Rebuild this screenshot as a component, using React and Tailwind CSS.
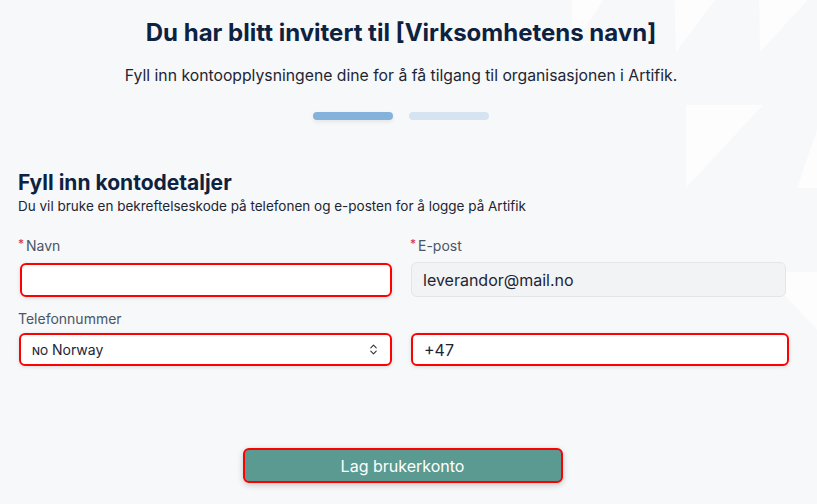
import { ChevronsUpDown } from "lucide-react";

function Backdrop() {
  return (
    <svg
      className="pointer-events-none absolute inset-0 h-full w-full"
      viewBox="0 0 817 504"
      preserveAspectRatio="none"
    >
      <g fill="#fdfdfe">
        <path d="M572 -10 L610 -10 L572 48 Z" />
        <path d="M674 -20 L730 -20 L676 52 Z" />
        <path d="M759 -20 L817 -20 L817 -10 L760 52 Z" />
        <path d="M686 105 L763 105 L686 188 Z" />
        <path d="M817 130 L817 188 L797 188 Z" />
        <path d="M763 272 L817 272 L817 330 Z" />
      </g>
    </svg>
  );
}

function Label({ children, required, className = "" }) {
  return (
    <label className={`flex items-start text-[14px] leading-4 text-[#4a5565] ${className}`}>
      {required && <span className="mr-[2px] text-[12px] leading-3 text-[#e0245e]">*</span>}
      {children}
    </label>
  );
}

export default function App() {
  return (
    <div
      className="relative h-[504px] w-[817px] overflow-hidden bg-[#f7f8fa]"
      style={{ fontFamily: "Inter, 'Liberation Sans', sans-serif" }}
    >
      <Backdrop />

      <div className="relative w-[802px]">
        <div className="flex flex-col items-center pt-[19px]">
          <h1 className="text-[24px] font-bold leading-7 text-[#0d2240]">
            Du har blitt invitert til [Virksomhetens navn]
          </h1>
          <p className="mt-[19px] text-[15.75px] leading-5 text-[#1d2533]">
            Fyll inn kontoopplysningene dine for å få tilgang til organisasjonen i Artifik.
          </p>
          <div className="mt-[26px] flex gap-4">
            <div className="h-[8px] w-[80px] rounded-full bg-[#84b2da] shadow-[0_2px_4px_rgba(0,0,0,0.08)]" />
            <div className="h-[8px] w-[80px] rounded-full bg-[#d6e4f1]" />
          </div>
        </div>

        <div className="pl-[18px] pt-[51px]">
          <h2 className="text-[21px] font-bold leading-6 text-[#0d2240]">Fyll inn kontodetaljer</h2>
          <p className="mt-[2px] text-[13.5px] leading-[18px] text-[#1d2533]">
            Du vil bruke en bekreftelseskode på telefonen og e-posten for å logge på Artifik
          </p>

          <div className="mt-[23px] grid grid-cols-[374px_379px] gap-x-[18px]">
            <div>
              <Label required className="mb-[9px]">Navn</Label>
              <div className="ml-[2px] h-[34px] rounded-[6px] border-2 border-[#f00] bg-white shadow-[0_1px_4px_rgba(0,0,0,0.12)]" />
            </div>
            <div>
              <Label required className="mb-[8px]">E-post</Label>
              <div className="ml-[1px] flex h-[35px] w-[375px] items-center rounded-[6px] border border-[#e3e5e8] bg-[#f2f3f5] px-[11px] text-[16px] text-[#1d2533]">
                leverandor@mail.no
              </div>
            </div>

            <div className="mt-[14px]">
              <Label className="mb-[6px]">Telefonnummer</Label>
              <div className="ml-[1px] flex h-[33px] items-center justify-between rounded-[6px] border-2 border-[#f00] bg-white pl-[11px] pr-[10px] text-[14px] text-[#1d2533] shadow-[0_1px_4px_rgba(0,0,0,0.12)]">
                <span>
                  <span className="text-[10.5px] font-medium">NO</span> Norway
                </span>
                <ChevronsUpDown size={13} strokeWidth={2} className="text-[#333]" />
              </div>
            </div>
            <div className="mt-[14px] flex flex-col justify-end">
              <div className="ml-[1px] flex h-[33px] items-center rounded-[6px] border-2 border-[#f00] bg-white px-[11px] text-[16px] text-[#1d2533] shadow-[0_1px_4px_rgba(0,0,0,0.12)]">
                +47
              </div>
            </div>
          </div>
        </div>

        <div className="mt-[82px] flex justify-center">
          <button className="ml-[3px] h-[35px] w-[320px] rounded-[6px] border-2 border-[#f00] bg-[#5b9a91] text-[16px] text-white shadow-[0_2px_6px_rgba(0,0,0,0.2)]">
            Lag brukerkonto
          </button>
        </div>
      </div>
    </div>
  );
}
